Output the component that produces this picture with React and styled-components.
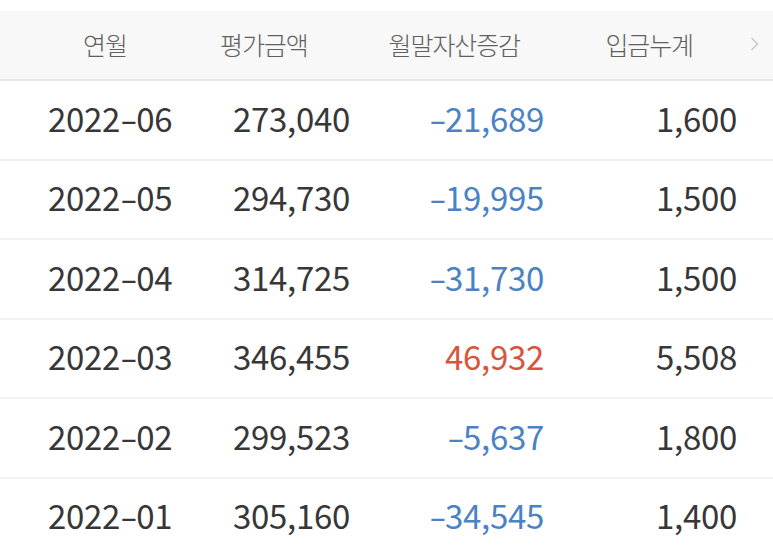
import React from "react";
import styled, { createGlobalStyle } from "styled-components";

const Global = createGlobalStyle`
  html, body { margin: 0; padding: 0; background: #ffffff; }
  body { font-family: "Noto Sans CJK KR", "Noto Sans", sans-serif; }
`;

const COLS = "220px 130px 194px 193px 36px";

const Page = styled.div`
  width: 773px;
  height: 555px;
  overflow: hidden;
  padding-top: 11px;
  box-sizing: border-box;
  background: #fff;
`;

const HeaderRow = styled.div`
  display: grid;
  grid-template-columns: ${COLS};
  height: 68px;
  align-items: center;
  background: #f8f8f8;
  border-bottom: 2px solid #e6e6e6;
`;

const HeadCell = styled.div`
  font-size: 25px;
  line-height: 30px;
  padding-bottom: 2px;
  color: #5f5f5f;
  font-weight: 300;
  letter-spacing: -1.1px;
  text-align: ${(p) => p.$align || "right"};
  padding-right: ${(p) => p.$pr || 0}px;
  padding-left: ${(p) => p.$pl || 0}px;
  white-space: nowrap;
`;

const Chevron = styled.div`
  display: flex;
  align-items: center;
  padding-left: 13px;
  padding-bottom: 2px;
`;

const Row = styled.div`
  display: grid;
  grid-template-columns: ${COLS};
  height: 77.5px;
  align-items: center;
  border-bottom: 2px solid #f1f1f1;
`;

const Cell = styled.div`
  font-size: 33px;
  line-height: 40px;
  padding-bottom: 4px;
  font-weight: 400;
  color: ${(p) => p.$color || "#373737"};
  text-align: ${(p) => p.$align || "right"};
  padding-left: ${(p) => p.$pl || 0}px;
  letter-spacing: -0.3px;
  white-space: nowrap;
`;

const Dash = styled.span`
  display: inline-block;
  transform: scaleX(1.55);
  margin: 0 2px 0 3px;
`;

function withDash(s) {
  const i = s.indexOf("-");
  if (i < 0) return s;
  return (
    <>
      {s.slice(0, i)}
      <Dash>-</Dash>
      {s.slice(i + 1)}
    </>
  );
}

const data = [
  ["2022-06", "273,040", "-21,689", "1,600"],
  ["2022-05", "294,730", "-19,995", "1,500"],
  ["2022-04", "314,725", "-31,730", "1,500"],
  ["2022-03", "346,455", "46,932", "5,508"],
  ["2022-02", "299,523", "-5,637", "1,800"],
  ["2022-01", "305,160", "-34,545", "1,400"],
];

export default function App() {
  return (
    <Page>
      <Global />
      <HeaderRow>
        <HeadCell $align="left" $pl={83}>연월</HeadCell>
        <HeadCell $pr={46}>평가금액</HeadCell>
        <HeadCell $pr={24}>월말자산증감</HeadCell>
        <HeadCell $pr={44}>입금누계</HeadCell>
        <Chevron>
          <svg width="9" height="16" viewBox="0 0 9 16">
            <path d="M1.5 2 L7.5 8 L1.5 14" fill="none" stroke="#c8c8c8" strokeWidth="1.5" />
          </svg>
        </Chevron>
      </HeaderRow>
      {data.map((r) => (
        <Row key={r[0]}>
          <Cell $align="left" $pl={48}>{withDash(r[0])}</Cell>
          <Cell>{r[1]}</Cell>
          <Cell $color={r[2].startsWith("-") ? "#4a82c4" : "#d8553c"}>{withDash(r[2])}</Cell>
          <Cell>{r[3]}</Cell>
          <div />
        </Row>
      ))}
    </Page>
  );
}
